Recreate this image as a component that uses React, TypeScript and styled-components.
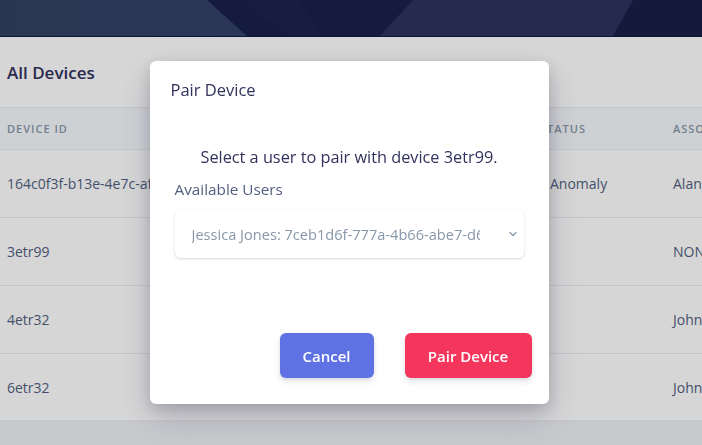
import * as React from 'react';
import styled, { createGlobalStyle } from 'styled-components';

const Global = createGlobalStyle`
  html, body { margin: 0; padding: 0; }
  body {
    font-family: "Open Sans", "Liberation Sans", sans-serif;
    background: #eef1f4;
    overflow: hidden;
  }
  * { box-sizing: border-box; }
`;

const Page = styled.div`
  width: 702px;
  height: 445px;
  position: relative;
  overflow: hidden;
  background: #eef1f4;
`;

const Header = styled.div`
  height: 37px;
  border-bottom: 1px solid #0e1a4a;
  background: #2d345f;
  svg { display: block; }
`;

const Card = styled.div`
  background: #fff;
  height: 383px;
`;

const CardHeader = styled.div`
  height: 71px;
  display: flex;
  align-items: center;
  padding: 0 7px;
  border-bottom: 1px solid #e9ecef;
`;

const Title = styled.h3`
  margin: 0;
  font-size: 17px;
  font-weight: 600;
  color: #32325d;
`;

const Table = styled.table`
  border-collapse: collapse;
  table-layout: fixed;
  width: 860px;
`;

const Th = styled.th<{ $w: number }>`
  width: ${p => p.$w}px;
  height: 41px;
  padding: 0 7px;
  text-align: left;
  background: #f6f9fc;
  color: #8898aa;
  font-size: 11px;
  font-weight: 600;
  letter-spacing: 1px;
  text-transform: uppercase;
  border-bottom: 1px solid #e9ecef;
  white-space: nowrap;
  overflow: hidden;
`;

const Td = styled.td`
  height: 68px;
  padding: 0 7px;
  font-size: 14px;
  color: #525f7f;
  border-bottom: 1px solid #e9ecef;
  white-space: nowrap;
  overflow: hidden;
`;

const Dot = styled.i`
  display: inline-block;
  width: 6px;
  height: 6px;
  border-radius: 50%;
  background: #fb6340;
  margin-right: 4px;
  vertical-align: middle;
`;

const Backdrop = styled.div`
  position: fixed;
  inset: 0;
  background: rgba(0, 0, 0, 0.16);
  display: flex;
  justify-content: center;
  align-items: flex-start;
  padding-top: 61px;
`;

const Modal = styled.div`
  width: 399px;
  height: 343px;
  margin-left: -4px;
  background: #fff;
  border-radius: 6px;
  box-shadow: 0 15px 35px rgba(50, 50, 93, 0.2), 0 5px 15px rgba(0, 0, 0, 0.17);
  display: flex;
  flex-direction: column;
  padding: 18px 17px 26px 21px;
`;

const ModalTitle = styled.h5`
  margin: 0;
  font-size: 16.5px;
  font-weight: 400;
  line-height: 22px;
  color: #32325d;
`;

const Body = styled.div`
  padding: 45px 8px 0 4px;
  display: flex;
  flex-direction: column;
`;

const Lead = styled.p`
  margin: 0;
  text-align: center;
  font-size: 16.3px;
  line-height: 22px;
  color: #32325d;
`;

const Label = styled.label`
  margin-top: 11px;
  font-size: 15.3px;
  line-height: 21px;
  color: #525f7f;
`;

const Select = styled.div`
  margin-top: 10px;
  height: 48px;
  border-radius: 6px;
  background: #fff;
  box-shadow: 0 1px 3px rgba(50, 50, 93, 0.18), 0 1px 0 rgba(0, 0, 0, 0.02);
  display: flex;
  align-items: center;
  padding: 0 5px 0 17px;
  color: #8898aa;
  font-size: 14.6px;
`;

const SelectText = styled.span`
  flex: 1;
  white-space: nowrap;
  overflow: hidden;
  margin-right: 27px;
`;

const Footer = styled.div`
  margin-top: auto;
  display: flex;
  justify-content: flex-end;
  gap: 31px;
`;

const Button = styled.button<{ $bg: string; $w: number }>`
  width: ${p => p.$w}px;
  height: 45px;
  border: 0;
  border-radius: 6px;
  background: ${p => p.$bg};
  color: #fff;
  font-family: "Open Sans", "Liberation Sans", sans-serif;
  font-size: 15px;
  font-weight: 600;
  box-shadow: 0 4px 6px rgba(50, 50, 93, 0.11), 0 1px 3px rgba(0, 0, 0, 0.08);
`;

const rows = [
  { id: '164c0f3f-b13e-4e7c-af2a-99d1', status: 'Anomaly', user: 'Alan Turing' },
  { id: '3etr99', status: '', user: 'NONE' },
  { id: '4etr32', status: '', user: 'John Doe' },
  { id: '6etr32', status: '', user: 'John Doe' },
];

function HeaderArt() {
  return (
    <svg width="702" height="36" viewBox="0 0 702 36" preserveAspectRatio="none">
      <defs>
        <linearGradient id="lite" x1="0" x2="1" y1="0" y2="0">
          <stop offset="0" stopColor="#344163" />
          <stop offset="1" stopColor="#344268" />
        </linearGradient>
      </defs>
      <rect width="702" height="36" fill="#2d345f" />
      <polygon points="0,0 207,0 247,36 0,36" fill="url(#lite)" />
      <polygon points="207,0 413,0 380,36 247,36" fill="#19214b" />
      <polygon points="240,0 300,0 320,36 290,36" fill="#1c2550" opacity="0.6" />
      <polygon points="633,0 702,0 702,36 613,36" fill="#1a1f47" />
    </svg>
  );
}

export default function App() {
  return (
    <Page>
      <Global />
      <Header>
        <HeaderArt />
      </Header>
      <Card>
        <CardHeader>
          <Title>All Devices</Title>
        </CardHeader>
        <Table>
          <thead>
            <tr>
              <Th $w={300}>Device ID</Th>
              <Th $w={233}>Device Type</Th>
              <Th $w={133}>Status</Th>
              <Th $w={194}>Associated User</Th>
            </tr>
          </thead>
          <tbody>
            {rows.map(r => (
              <tr key={r.id}>
                <Td>{r.id}</Td>
                <Td>Sensor</Td>
                <Td>{r.status && <><Dot />{r.status}</>}</Td>
                <Td>{r.user}</Td>
              </tr>
            ))}
          </tbody>
        </Table>
      </Card>
      <Backdrop>
        <Modal>
          <ModalTitle>Pair Device</ModalTitle>
          <Body>
            <Lead>Select a user to pair with device 3etr99.</Lead>
            <Label>Available Users</Label>
            <Select>
              <SelectText>Jessica Jones: 7ceb1d6f-777a-4b66-abe7-d64a11c0</SelectText>
              <svg width="12" height="12" viewBox="0 0 12 12">
                <path d="M3 4.5 L6 7.5 L9 4.5" fill="none" stroke="#8898aa" strokeWidth="1.3" strokeLinecap="round" strokeLinejoin="round" />
              </svg>
            </Select>
          </Body>
          <Footer>
            <Button $bg="#5e72e4" $w={94}>Cancel</Button>
            <Button $bg="#f5365c" $w={127}>Pair Device</Button>
          </Footer>
        </Modal>
      </Backdrop>
    </Page>
  );
}
